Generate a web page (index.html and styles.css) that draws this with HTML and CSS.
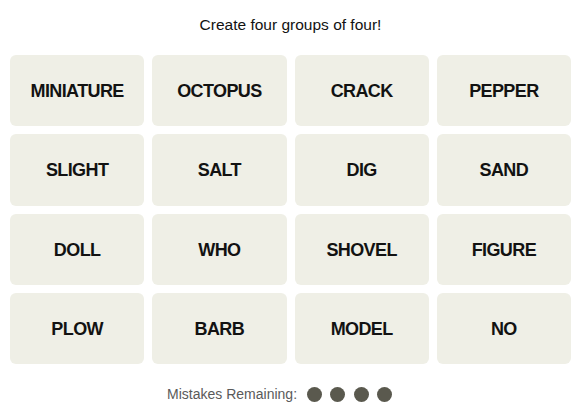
FILE: index.html
```html
<!DOCTYPE html>
<html lang="en">
<head>
    <meta charset="UTF-8">
    <meta name="viewport" content="width=device-width, initial-scale=1.0">
    <title>Connections</title>
    <link rel="stylesheet" href="styles.css">
</head>
<body>
    <div id="game">
        <p class="prompt">Create four groups of four!</p>
        <div class="board">
            <button class="tile">MINIATURE</button>
            <button class="tile">OCTOPUS</button>
            <button class="tile">CRACK</button>
            <button class="tile">PEPPER</button>
            <button class="tile">SLIGHT</button>
            <button class="tile">SALT</button>
            <button class="tile">DIG</button>
            <button class="tile">SAND</button>
            <button class="tile">DOLL</button>
            <button class="tile">WHO</button>
            <button class="tile">SHOVEL</button>
            <button class="tile">FIGURE</button>
            <button class="tile">PLOW</button>
            <button class="tile">BARB</button>
            <button class="tile">MODEL</button>
            <button class="tile">NO</button>
        </div>
        <div class="mistakes">
            <span>Mistakes Remaining:</span>
            <span class="dots">
                <span class="dot"></span>
                <span class="dot"></span>
                <span class="dot"></span>
                <span class="dot"></span>
            </span>
        </div>
    </div>
</body>
</html>
```

FILE: styles.css
```css
body {
    margin: 0;
    padding: 0;
    background-color: #fff;
    font-family: "Liberation Sans", Arial, sans-serif;
    color: #121212;
}
#game {
    padding: 0 6px 0 10px;
}
.prompt {
    margin: 0;
    padding-top: 16px;
    height: 40px;
    box-sizing: border-box;
    text-align: center;
    font-size: 15.5px;
    line-height: 18px;
}
.board {
    display: grid;
    grid-template-columns: repeat(4, 1fr);
    grid-auto-rows: 71.25px;
    gap: 8px;
    margin-top: 15px;
}
.tile {
    border: none;
    border-radius: 6px;
    background-color: #efefe6;
    color: #121212;
    font-family: "Liberation Sans", Arial, sans-serif;
    font-weight: bold;
    font-size: 18px;
    letter-spacing: -0.6px;
    cursor: pointer;
    padding: 2px 0 0;
}
.mistakes {
    display: flex;
    justify-content: center;
    align-items: center;
    gap: 10px;
    margin-top: 22px;
    padding-right: 22px;
    color: #5a5a5a;
    font-size: 14px;
}
.dots {
    display: flex;
    gap: 8.3px;
}
.dot {
    width: 15px;
    height: 15px;
    border-radius: 50%;
    background-color: #5a594e;
}
```
